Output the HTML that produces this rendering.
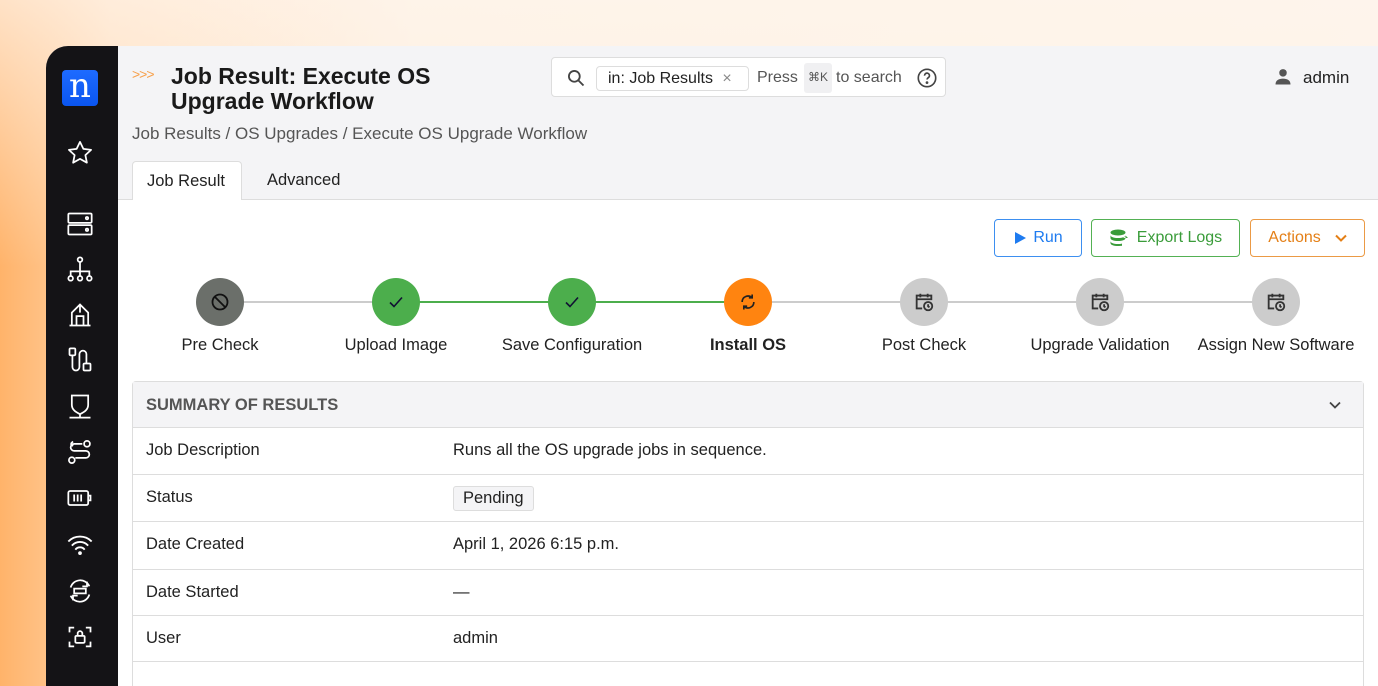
<!DOCTYPE html>
<html><head><meta charset="utf-8"><style>
*{box-sizing:border-box;margin:0;padding:0}
body{width:1378px;height:668px;overflow:hidden;font-family:"Liberation Sans","DejaVu Sans",sans-serif;background:linear-gradient(90deg,#ffb36a 0%,#ffd6ad 8%,#fdeedd 30%,#fdf1e6 100%);position:relative}
.bgtop{position:absolute;left:0;top:0;width:1378px;height:668px;background:linear-gradient(180deg,rgba(255,246,238,.7),rgba(255,246,238,0) 40%)}
.win{position:absolute;left:46px;top:46px;width:1340px;height:640px;border-top-left-radius:22px;overflow:hidden;background:#f4f4f6}
.side{position:absolute;left:0;top:0;width:72px;height:100%;background:#141316}
.main{position:absolute;left:72px;top:0;right:0;bottom:0}
.abs{position:absolute}
.ico{position:absolute;left:20px;width:28px;height:28px}
.t{color:#222;font-size:16px;white-space:nowrap}
.btn{position:absolute;top:173px;height:38px;border:1px solid;border-radius:4px;font-size:16px;display:flex;align-items:center;justify-content:center;gap:6px;background:#fff}
.circ{position:absolute;width:48px;height:48px;border-radius:50%;top:232px;display:flex;align-items:center;justify-content:center}
.lab{position:absolute;top:290px;width:180px;text-align:center;font-size:16.5px;color:#222}
.row{position:absolute;left:14px;width:1232px;border-top:1px solid #ddd;height:47px;font-size:16.5px;color:#222}
.row span{position:absolute;top:13px}
</style></head><body><div class="bgtop"></div>
<div class="win">
<div class="side">
 <div class="abs" style="left:16px;top:24px;width:36px;height:36px;border-radius:4px;background:linear-gradient(#1e6bff,#0a55f0);color:#fff;font-family:'DejaVu Serif',serif;font-size:34px;line-height:32px;text-align:center;font-weight:300">n</div>
 <svg class="ico" style="top:93px" viewBox="0 0 24 24" fill="none" stroke="#fff" stroke-width="1.5" stroke-linejoin="round"><path d="M12 2.5l2.9 6 6.6.8-4.9 4.5 1.3 6.5L12 17l-5.9 3.3 1.3-6.5L2.5 9.3l6.6-.8z"/></svg>
 <svg class="ico" style="top:164px" viewBox="0 0 24 24" fill="none" stroke="#fff" stroke-width="1.5"><rect x="2" y="3" width="20" height="8" rx="1"/><rect x="2" y="13" width="20" height="8" rx="1"/><circle cx="18" cy="7" r="1"/><circle cx="18" cy="17" r="1"/></svg>
 <svg class="ico" style="top:209px" viewBox="0 0 24 24" fill="none" stroke="#fff" stroke-width="1.5"><circle cx="12" cy="4" r="2"/><circle cx="4" cy="20" r="2"/><circle cx="12" cy="20" r="2"/><circle cx="20" cy="20" r="2"/><path d="M12 6v12M4 18v-4h16v4"/></svg>
 <svg class="ico" style="top:255px" viewBox="0 0 24 24" fill="none" stroke="#fff" stroke-width="1.5"><path d="M3 21h18M5 21V10l7-7 7 7v11M9 21v-8h6v8M12 3v7"/></svg>
 <svg class="ico" style="top:300px" viewBox="0 0 24 24" fill="none" stroke="#fff" stroke-width="1.5"><rect x="3" y="2" width="5" height="6" rx="1"/><rect x="15" y="15" width="6" height="6" rx="1"/><path d="M5.5 8v10a3 3 0 006 0V7a3 3 0 016 0v8"/></svg>
 <svg class="ico" style="top:346px" viewBox="0 0 24 24" fill="none" stroke="#fff" stroke-width="1.5"><path d="M5 3h14v8c0 4-3 6-7 8-4-2-7-4-7-8zM12 19v3M3 22h18"/></svg>
 <svg class="ico" style="top:392px" viewBox="0 0 24 24" fill="none" stroke="#fff" stroke-width="1.5"><circle cx="18" cy="5" r="2.5"/><circle cx="5" cy="19" r="2.5"/><path d="M14 5H7a3 3 0 000 6h10a3 3 0 010 6h-9M4 5l2-2M4 5l2 2"/></svg>
 <svg class="ico" style="top:438px" viewBox="0 0 24 24" fill="none" stroke="#fff" stroke-width="1.5"><rect x="2" y="6" width="17" height="12" rx="1.5"/><path d="M19 10h2v4h-2M7 9v6M10 9v6M13 9v6"/></svg>
 <svg class="ico" style="top:485px" viewBox="0 0 24 24" fill="none" stroke="#fff" stroke-width="1.6"><path d="M2 9a14 14 0 0120 0M5 12.5a9.5 9.5 0 0114 0M8 16a5 5 0 018 0"/><circle cx="12" cy="19" r=".8" fill="#fff"/></svg>
 <svg class="ico" style="top:531px" viewBox="0 0 24 24" fill="none" stroke="#fff" stroke-width="1.5"><path d="M4 9a8.5 8.5 0 0116-1M20 15a8.5 8.5 0 01-16 1M18 4v4h-4M6 20v-4h4M7 10h10v4H7z"/></svg>
 <svg class="ico" style="top:577px" viewBox="0 0 24 24" fill="none" stroke="#fff" stroke-width="1.5"><path d="M3 8V4h4M17 4h4v4M21 16v4h-4M7 20H3v-4"/><rect x="8" y="11" width="8" height="6" rx="1"/><path d="M10 11V9a2 2 0 014 0v2"/></svg>
</div>
<div class="main">
 <div class="abs" style="left:14px;top:20px;color:#f7a04a;font-size:14px;letter-spacing:-1px">&gt;&gt;&gt;</div>
 <div class="abs" style="left:53px;top:18px;font-size:23px;font-weight:bold;line-height:25px;color:#1a1a1a">Job Result: Execute OS<br>Upgrade Workflow</div>
 <div class="abs t" style="left:14px;top:78px;color:#555;font-size:17px">Job Results / OS Upgrades / Execute OS Upgrade Workflow</div>
 <div class="abs" style="left:433px;top:11px;width:395px;height:40px;background:#fff;border:1px solid #ddd;border-radius:4px"></div>
 <svg class="abs" style="left:448px;top:22px" width="20" height="20" viewBox="0 0 24 24" fill="none" stroke="#444" stroke-width="2.2"><circle cx="10" cy="10" r="6.5"/><path d="M15 15l6 6"/></svg>
 <div class="abs t" style="left:478px;top:20px;height:25px;width:153px;border:1px solid #ddd;border-radius:4px;padding:3px 0 0 11px">in: Job Results <span style="color:#888;margin-left:5px">×</span></div>
 <div class="abs t" style="left:639px;top:23px;color:#555">Press</div>
 <div class="abs" style="left:686px;top:17px;width:28px;height:30px;background:#f0f0f2;border-radius:3px;font-size:12px;color:#555;padding-top:7px;text-align:center">⌘K</div>
 <div class="abs t" style="left:718px;top:23px;color:#555">to search</div>
 <svg class="abs" style="left:798px;top:21px" width="22" height="22" viewBox="0 0 24 24" fill="none" stroke="#444" stroke-width="1.8"><circle cx="12" cy="12" r="9.5"/><path d="M9.3 9.5a2.7 2.7 0 115 1.3c-.8 1-2.3 1.4-2.3 2.9"/><circle cx="12" cy="17" r=".6" fill="#444"/></svg>
 <svg class="abs" style="left:1155px;top:21px" width="20" height="20" viewBox="0 0 24 24" fill="#555"><circle cx="12" cy="7" r="4.5"/><path d="M3 21c0-5 4-7 9-7s9 2 9 7z"/></svg>
 <div class="abs t" style="left:1185px;top:22px;font-size:17px">admin</div>
 <div class="abs" style="left:0;top:153px;right:0;bottom:0;background:#fff;border-top:1px solid #ddd"></div>
 <div class="abs t" style="left:14px;top:115px;width:110px;height:39px;background:#fff;border:1px solid #ddd;border-bottom:none;border-radius:4px 4px 0 0;padding:10px 0 0 14px;font-size:16.5px">Job Result</div>
 <div class="abs t" style="left:149px;top:125px;font-size:16.5px">Advanced</div>
 <div class="btn" style="left:876px;width:88px;color:#1e7bf0;border-color:#3d8ff0"><svg width="14" height="14" viewBox="0 0 14 14"><path d="M2 1l11 6-11 6z" fill="#1e7bf0"/></svg>Run</div>
 <div class="btn" style="left:973px;width:149px;color:#3a9c3a;border-color:#53b153"><svg width="22" height="18" viewBox="0 0 22 18" fill="#3a9c3a"><ellipse cx="9" cy="3.5" rx="7.5" ry="3"/><path d="M1.5 6c0 2 3.5 3 7.5 3s7.5-1 7.5-3v3c0 2-3.5 3-7.5 3S1.5 11 1.5 9zM1.5 12c0 2 3.5 3 7.5 3s3-.2 4-.5v2.3c-1 .2-2.5.2-4 .2-4 0-7.5-1-7.5-3zM14 9h5l-2-2M19 9l-2 2" /></svg>Export Logs</div>
 <div class="btn" style="left:1132px;width:115px;color:#e47f16;border-color:#eb9a45">Actions <svg width="12" height="8" viewBox="0 0 12 8" style="margin-left:8px" fill="none" stroke="#e47f16" stroke-width="2"><path d="M1 1.5l5 5 5-5"/></svg></div>
 <div class="abs" style="left:102px;top:255px;width:176px;height:2px;background:#ccc"></div>
 <div class="abs" style="left:278px;top:255px;width:352px;height:2px;background:#4cae4c"></div>
 <div class="abs" style="left:630px;top:255px;width:528px;height:2px;background:#ccc"></div>
 <div class="circ" style="left:78px;background:#6b6f6a"><svg width="20" height="20" viewBox="0 0 20 20" fill="none" stroke="#111" stroke-width="1.8"><circle cx="10" cy="10" r="7.5"/><path d="M5 5l10 10"/></svg></div>
 <div class="circ" style="left:254px;background:#4cae4c"><svg width="18" height="18" viewBox="0 0 18 18" fill="none" stroke="#113" stroke-width="1.6"><path d="M3 9.5l4 4 8-9"/></svg></div>
 <div class="circ" style="left:430px;background:#4cae4c"><svg width="18" height="18" viewBox="0 0 18 18" fill="none" stroke="#113" stroke-width="1.6"><path d="M3 9.5l4 4 8-9"/></svg></div>
 <div class="circ" style="left:606px;background:#ff8410"><svg width="20" height="20" viewBox="0 0 24 24" fill="none" stroke="#222" stroke-width="2"><path d="M5 12a7 7 0 0112-5M19 12a7 7 0 01-12 5M17 3v4h-4M7 21v-4h4"/></svg></div>
 <div class="circ" style="left:782px;background:#ccc"><svg width="22" height="22" viewBox="0 0 24 24" fill="none" stroke="#333" stroke-width="2"><path d="M10 19H4V5h16v5M4 9h16M8 3v4M16 3v4"/><circle cx="16.5" cy="16.5" r="4.5"/><path d="M16.5 14.5v2.3l1.5 1"/></svg></div>
 <div class="circ" style="left:958px;background:#ccc"><svg width="22" height="22" viewBox="0 0 24 24" fill="none" stroke="#333" stroke-width="2"><path d="M10 19H4V5h16v5M4 9h16M8 3v4M16 3v4"/><circle cx="16.5" cy="16.5" r="4.5"/><path d="M16.5 14.5v2.3l1.5 1"/></svg></div>
 <div class="circ" style="left:1134px;background:#ccc"><svg width="22" height="22" viewBox="0 0 24 24" fill="none" stroke="#333" stroke-width="2"><path d="M10 19H4V5h16v5M4 9h16M8 3v4M16 3v4"/><circle cx="16.5" cy="16.5" r="4.5"/><path d="M16.5 14.5v2.3l1.5 1"/></svg></div>
 <div class="lab" style="left:12px">Pre Check</div>
 <div class="lab" style="left:188px">Upload Image</div>
 <div class="lab" style="left:364px">Save Configuration</div>
 <div class="lab" style="left:540px;font-weight:bold">Install OS</div>
 <div class="lab" style="left:716px">Post Check</div>
 <div class="lab" style="left:892px">Upgrade Validation</div>
 <div class="lab" style="left:1068px">Assign New Software</div>
 <div class="abs" style="left:14px;top:335px;width:1232px;height:320px;border:1px solid #ddd;border-radius:4px"></div>
 <div class="abs" style="left:15px;top:336px;width:1230px;height:45px;background:#f4f4f6;font-size:16.5px;font-weight:bold;color:#555;padding:14px 0 0 13px">SUMMARY OF RESULTS<svg style="position:absolute;right:22px;top:19px" width="12" height="8" viewBox="0 0 12 8" fill="none" stroke="#444" stroke-width="1.8"><path d="M1 1.5l5 5 5-5"/></svg></div>
 <div class="row" style="top:381px"><span style="left:14px">Job Description</span><span style="left:321px">Runs all the OS upgrade jobs in sequence.</span></div>
 <div class="row" style="top:428px"><span style="left:14px">Status</span><span style="left:321px;top:11px;border:1px solid #ddd;background:#f4f4f6;border-radius:3px;padding:2px 9px">Pending</span></div>
 <div class="row" style="top:475px"><span style="left:14px">Date Created</span><span style="left:321px">April 1, 2026 6:15 p.m.</span></div>
 <div class="row" style="top:523px"><span style="left:14px">Date Started</span><span style="left:321px">—</span></div>
 <div class="row" style="top:569px"><span style="left:14px">User</span><span style="left:321px">admin</span></div>
 <div class="row" style="top:615px"></div>
</div>
</div>
</body></html>
